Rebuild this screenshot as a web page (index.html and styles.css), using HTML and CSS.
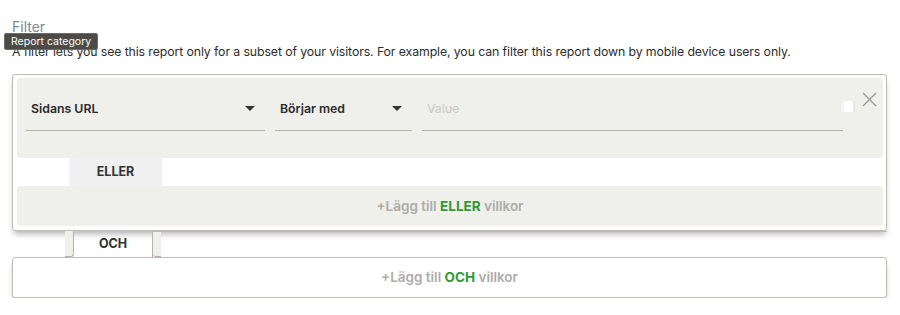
FILE: index.html
```html
<!DOCTYPE html>
<html>
 <head>
  <meta charset="utf-8">
  <title>Filter</title>
  <link rel="stylesheet" href="styles.css">
 </head>
 <body>
  <div class="segment">
    <div class="head">
      <h3 class="title">Filter</h3>
      <span class="tip">Report category</span>
      <p class="desc">A filter lets you see this report only for a subset of your visitors. For example, you can filter this report down by mobile device users only.</p>
    </div>

    <div class="andGroup">
      <div class="orRow">
        <div class="select wide"><span>Sidans URL</span><i class="caret"></i></div>
        <div class="select mid"><span>Börjar med</span><i class="caret"></i></div>
        <div class="value"><span>Value</span></div>
        <span class="grip"></span>
        <svg class="close" width="15" height="15" viewBox="0 0 15 15">
          <path d="M1 1 L14 14 M14 1 L1 14" stroke="#9a9a96" stroke-width="1.4" fill="none"/>
        </svg>
      </div>
      <div class="tabRow">
        <div class="tab">ELLER</div>
      </div>
      <div class="addOr">+Lägg till <b>ELLER</b> villkor</div>
    </div>

    <div class="andTabs">
      <div class="side left"><div class="strip"></div></div>
      <div class="andTab">OCH</div>
      <div class="side right"><div class="strip"></div></div>
    </div>

    <div class="addAnd">+Lägg till <b>OCH</b> villkor</div>
  </div>
 </body>
</html>
```

FILE: styles.css
```css
* {
  margin: 0;
  padding: 0;
  box-sizing: border-box;
}
body {
  font-family: Inter, "Liberation Sans", sans-serif;
  color: #333;
  background: #fff;
}
.segment {
  width: 887px;
  padding: 19px 0 0 12px;
}
.head {
  position: relative;
}
.title {
  font-size: 14px;
  font-weight: normal;
  line-height: 16px;
  color: #7b8896;
}
.tip {
  position: absolute;
  left: -8px;
  top: 14px;
  width: 94px;
  height: 17px;
  line-height: 15px;
  font-size: 10.5px;
  white-space: nowrap;
  color: #fff;
  background: #4c4b46;
  border: 1px solid #6c6b66;
  border-radius: 2px;
  padding-left: 6px;
}
.desc {
  margin-top: 9px;
  font-size: 12.3px;
  line-height: 16px;
  color: #2c2c2c;
  letter-spacing: -0.1px;
}

.andGroup {
  margin-top: 14px;
  border: 1px solid #bdbbb3;
  border-radius: 3px;
  padding: 3px 3px 4px 4px;
  box-shadow: 0 5px 6px -2px rgba(0,0,0,0.3);
}
.orRow {
  position: relative;
  height: 80px;
  background: #efefeb;
  border-radius: 3px;
  padding: 16px 0 0 9px;
  display: flex;
  gap: 10px;
}
.select,
.value {
  height: 37px;
  border-bottom: 1px solid #b4b2ab;
  display: flex;
  align-items: center;
  justify-content: space-between;
  padding: 0 10px 8px 5px;
  font-size: 12.3px;
  font-weight: 600;
  color: #2a2a2a;
}
.wide { width: 239px; }
.mid { width: 137px; }
.value {
  width: 421px;
  font-weight: normal;
  color: #c9c9c5;
}
.caret {
  width: 0;
  height: 0;
  border-left: 5px solid transparent;
  border-right: 5px solid transparent;
  border-top: 5px solid #333;
}
.grip {
  position: absolute;
  left: 824px;
  top: 23px;
  width: 14px;
  height: 11px;
  background: #fff;
  border-left: 3px solid #f4f4f2;
  border-right: 2px solid #e6e6e2;
}
.close {
  position: absolute;
  right: 6px;
  top: 14px;
}

.tabRow {
  height: 28px;
  padding-left: 52px;
}
.tab {
  width: 93px;
  height: 28px;
  background: #eff0ef;
  border-left: 8px solid #f1f1f3;
  padding-right: 8px;
  text-align: center;
  line-height: 28px;
  font-size: 12.5px;
  font-weight: bold;
  color: #333;
}
.addOr,
.addAnd {
  height: 40px;
  line-height: 40px;
  text-align: center;
  font-size: 13.5px;
  font-weight: 600;
  color: #acaca8;
  background: #efefeb;
  border-radius: 3px;
}
.addOr b,
.addAnd b {
  color: #2f9a34;
  font-weight: bold;
}

.andTabs {
  display: flex;
  height: 26px;
}
.side {
  display: flex;
}
.side.left {
  width: 62px;
  justify-content: flex-end;
}
.side.left .strip {
  width: 9px;
  background: #efefeb;
  border-right: 1px solid #b4b2ab;
  border-bottom: 1px solid #b4b2ab;
  border-bottom-right-radius: 3px;
}
.side.right {
  flex: 1;
  border-top: 1px solid #bdbbb3;
  border-left: 1px solid #b4b2ab;
  border-top-left-radius: 3px;
}
.side.right .strip {
  width: 8px;
  background: #efefeb;
  border-bottom: 1px solid #b4b2ab;
  border-bottom-left-radius: 3px;
}
.andTab {
  width: 78px;
  text-align: center;
  line-height: 26px;
  font-size: 12.5px;
  font-weight: bold;
  color: #333;
}
.addAnd {
  height: 41px;
  line-height: 39px;
  background: #fff;
  border: 1px solid #bdbbb3;
  box-shadow: 0 5px 6px -2px rgba(0,0,0,0.3);
}
```
